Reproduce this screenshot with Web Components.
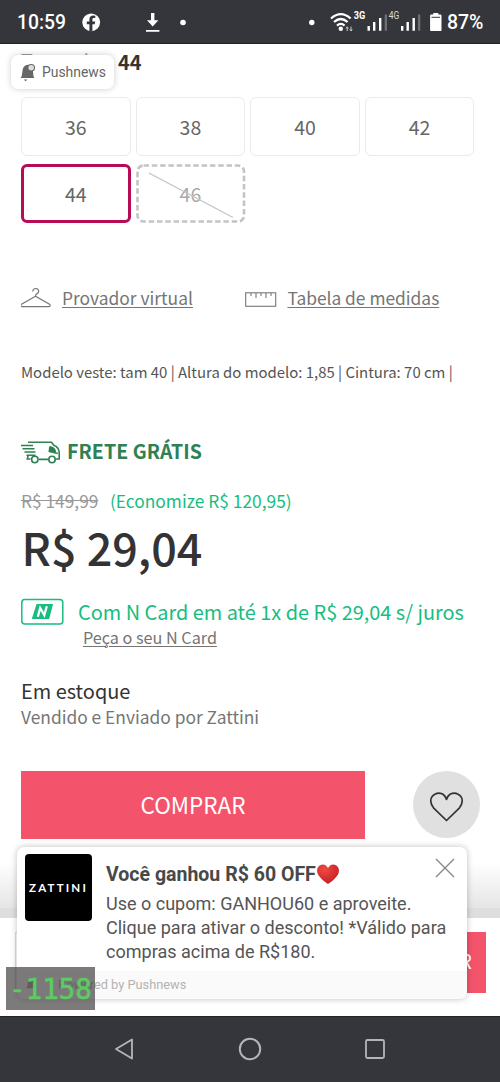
<!DOCTYPE html>
<html lang="pt-BR">
<head>
<meta charset="utf-8">
<title>Zattini</title>
<style>
html,body{margin:0;background:#fff}
body{width:500px;height:1082px;overflow:hidden;font-family:"Noto Sans CJK SC","Noto Sans",sans-serif}
</style>
</head>
<body>
<product-screen></product-screen>
<script>
const define = (name, html, init) => customElements.define(name, class extends HTMLElement {
  connectedCallback() {
    if (this.shadowRoot) return;
    const root = this.attachShadow({ mode: 'open' });
    const t = document.createElement('template');
    t.innerHTML = html;
    root.append(t.content.cloneNode(true));
    if (init) init(this, root);
  }
});

/* One line of text: h = line box, size = font size, width = advance to fill,
   track = fill it with letter spacing and keep the size. */
define('fit-line', `<style>
:host{display:block;white-space:pre;flex:none}
</style><span><slot></slot></span>`, (el, root) => {
  const span = root.querySelector('span');
  const h = el.getAttribute('h'), w = +el.getAttribute('width');
  let size = +el.getAttribute('size') || 18;
  el.style.height = el.style.lineHeight = h + 'px';
  el.style.fontSize = size + 'px';
  if (!w) return;
  const natural = span.getBoundingClientRect().width;
  if (el.hasAttribute('track')) el.style.letterSpacing = (w - natural) / el.textContent.length + 'px';
  else el.style.fontSize = size * w / natural + 'px';
});

define('status-bar', `<style>
:host{display:flex;height:44px;box-sizing:border-box;background:#35363b;border-bottom:1px solid #222326;color:#fff;font-family:Roboto,sans-serif;font-weight:500}
svg{display:block}
fit-line{margin-left:17px}
fit-line.p{margin-left:0}
</style>
<fit-line h="46" width="49" size="19">10:59</fit-line>
<svg width="381" height="44" viewBox="66 0 381 44" fill="#fff">
<circle cx="91.2" cy="22.3" r="8.9"/>
<path d="M89.400 31.300v-7h-2.600v-2.800h2.600v-2c0-2.700 1.500-4 3.800-4l2.100.2v2.400h-1.300c-1.200 0-1.600.7-1.600 1.500v1.900h2.800l-.5 2.800h-2.300v7z" fill="#35363b"/>
<path d="M151 13h3.400v7.200h4l-5.700 6.200-5.700-6.200h4zM146 30h13.400v1.800H146z"/>
<circle cx="183" cy="22.500" r="2.800"/><circle cx="311.800" cy="22.500" r="2.700"/>
<g fill="none" stroke="#fff" stroke-width="2.200"><path d="M331 18.500q9.800-8.600 19.600 0"/><path d="M334 22q6.800-6 13.600 0"/><path d="M337 25.600q3.800-3.400 7.600 0"/></g>
<circle cx="340.800" cy="28.700" r="2.200"/>
<path d="M347.200 31v-3.600M346 28.400l1.200-1.600 1.200 1.600M351 26.500v4M349.800 29.400l1.200 1.600 1.200-1.600" stroke="#ddd" stroke-width=".9" fill="none"/>
<text x="353.700" y="19" font-size="10" font-weight="700" textLength="11.500" lengthAdjust="spacingAndGlyphs">3G</text>
<text x="388.700" y="19" font-size="10" font-weight="400" textLength="10.500" lengthAdjust="spacingAndGlyphs" fill="#ddd">4G</text>
<path d="M367.500 26h2.400v4.700h-2.400zM373 22h2.400v8.700H373zM379 18h2.400v12.700H379zM401 26h2.400v4.700H401zM406.500 22h2.400v8.700h-2.400zM412.500 18h2.400v12.700h-2.400z"/>
<path d="M384.700 14.500h2.300v16.200h-2.300zM418 14.500h2.300v16.200H418z" fill="#6e6f73"/>
<path d="M433.300 13h5v1.500h2q1.200 0 1.200 1.200v14.200q0 1.200-1.200 1.200h-9q-1.200 0-1.200-1.200V15.700q0-1.200 1.200-1.200h2z"/><path d="M431.500 16.800h8.500v1h-8.500z" fill="#35363b"/>
</svg>
<fit-line class="p" h="46" width="36.500" size="18">87%</fit-line>`);

define('push-chip', `<style>
:host{position:absolute;left:11px;top:55px;width:103px;height:34px;border-radius:7px;background:#fff;box-shadow:0 0 6px rgba(0,0,0,.2);display:flex;align-items:center;color:#666;font-family:Roboto,sans-serif}
svg{margin:0 6px 0 9px}
</style><svg width="16" height="19" viewBox="0 0 15 17.500"><path d="M.500 14l1.200-2 .8-6Q3.500 1.500 8 1.500l4 4 .6 6.500.9 2z" fill="#666"/><circle cx="10.500" cy="4.300" r="3.100" fill="#ddd" stroke="#666"/><path d="M3.500 15.200h3.500l-1.700 1.800z" fill="#666"/></svg>
<fit-line h="32" width="64" size="13.500">Pushnews</fit-line>`);

define('size-option', `<style>
:host{display:flex;justify-content:center;height:59px;box-sizing:border-box;border:1.500px solid #ebebeb;border-radius:6px;color:#666}
:host([selected]){border:3px solid #b80b55}
:host([off]){border:0;color:#aaa;position:relative}
svg{display:none;position:absolute;inset:0}
:host([off]) svg{display:block}
fit-line{align-self:center}
</style><svg width="110" height="59" fill="none" stroke="#c4c4c4"><rect x="1.500" y="1.500" width="106.500" height="56" rx="6" stroke-width="2.600" stroke-dasharray="5.500 2.800"/><path d="M13 9l84 44.500" stroke-width="1.300"/></svg>
<fit-line h="59" size="19.500"><slot></slot></fit-line>`);

define('size-picker', `<style>
:host{display:grid;grid-template-columns:repeat(4,109.700px);column-gap:4.900px;row-gap:7.500px;margin-top:15px;height:126px}
</style><size-option>36</size-option><size-option>38</size-option><size-option>40</size-option><size-option>42</size-option><size-option selected>44</size-option><size-option off>46</size-option>`);

define('fit-links', `<style>
:host{display:flex;margin-top:60px;height:30px;color:#757575}
.u{text-decoration:underline;text-decoration-thickness:1.400px;text-underline-offset:2px}
svg{flex:none;display:block}
</style>
<svg width="41" height="30" viewBox="21 283 41 30" fill="none" stroke="#777" stroke-width="1.200"><path d="M32.700 291.500q.3-3 3.200-3 2.800.2 2.800 2.700 0 1.600-1.700 2.400-1.500.8-1.500 2.600M35.500 296.200l-14 8q-1.800 2.300.5 2.500h26.500q2.800-.3 1-2.500z"/></svg>
<fit-line class="u" h="29" width="131">Provador virtual</fit-line>
<svg width="94.500" height="30" viewBox="193 283 94.500 30" fill="none" stroke="#777" stroke-width="1.100"><rect x="245.700" y="292.800" width="30" height="13.500"/><path d="M251 293v3M256 293v5M261 293v3M266 293v5M271 293v3"/></svg>
<fit-line class="u" h="29" width="152">Tabela de medidas</fit-line>`);

define('free-shipping', `<style>
:host{display:flex;margin-top:51px;height:28px;color:#2f8053}
svg{margin-left:-1px;flex:none;display:block}
fit-line{font-weight:700}
</style><svg width="47" height="28" viewBox="20 437 47 28" fill="none" stroke="#2f8053" stroke-width="1.600"><path d="M28 442.300h23.500l2.500 3.200q4.500 1.500 5.200 6.500v7h-3.400M48 459.400h-9M30.500 459h-3.200l.8-3.500M21 445.500h12M22.500 448.700h12M24.500 452h11M26.500 455.200h9M50 446.500l-.7 5 8.500 2"/><path d="M50.800 447l-.5 3.800 5 .8q-.7-3.800-4.500-4.600z" fill="#2f8053"/><circle cx="34.800" cy="459.500" r="3.200"/><circle cx="52" cy="459.500" r="3.200"/></svg>
<fit-line h="28" size="19.500" track width="135">FRETE GRÁTIS</fit-line>`);

define('price-block', `<style>
:host{display:block;margin-top:22px;height:106px}
.r{display:flex;gap:11.500px}
.old{color:#999;text-decoration:line-through}
.save{color:#17bd7e}
.now{color:#333;font-weight:500;margin:5px 0 0 .500px}
</style><div class="r"><fit-line class="old" h="28" width="77.500">R$ 149,99</fit-line><fit-line class="save" h="28" width="182">(Economize R$ 120,95)</fit-line></div>
<fit-line class="now" h="54" width="181" size="44">R$ 29,04</fit-line>`);

define('n-card', `<style>
:host{display:grid;grid-template-columns:57px 1fr;margin-top:5px}
svg{display:block}
.g{color:#17bd7e}
.l{grid-column:2;margin:0 0 0 5px;color:#757575;text-decoration:underline;text-decoration-thickness:1px;text-underline-offset:2px}
</style><svg width="56" height="28" viewBox="0 1.500 56 28"><rect x=".8" y="3" width="41" height="24.500" rx="3" fill="none" stroke="#17bd7e" stroke-width="1.500"/><path d="M15.500 7.500H32L28.200 22.500H10.800z" fill="#17bd7e"/><path d="M16.800 20.300L19.200 11.500 23.300 18.500 25.800 9.700" fill="none" stroke="#fff" stroke-width="2.300"/></svg>
<fit-line class="g" h="28" width="386">Com N Card em até 1x de R$ 29,04 s/ juros</fit-line>
<fit-line class="l" h="22" width="134">Peça o seu N Card</fit-line>`);

define('stock-info', `<style>
:host{display:block;margin-top:29px;height:56px}
.a{color:#333}.b{color:#757575}
</style><fit-line class="a" h="28" width="109.500">Em estoque</fit-line><fit-line class="b" h="24" width="238.500">Vendido e Enviado por Zattini</fit-line>`);

define('buy-row', `<style>
:host{display:flex;justify-content:space-between;margin-top:38px;width:458.500px}
.buy{width:344px;height:68px;background:#f4546b;color:#fff;display:flex;justify-content:center}
.fav{width:67px;height:67px;border-radius:50%;background:#e0e0e0}
svg{display:block}
</style><div class="buy"><fit-line h="66" width="105">COMPRAR</fit-line></div>
<div class="fav"><svg width="67" height="67" viewBox="0 0 67 67" fill="none" stroke="#333" stroke-width="1.700"><path d="M33.500 49.500L20.500 36.800Q15.500 30 19.300 25.300Q24 20 30 23.300Q32.400 25 33.500 28.400Q34.600 25 37 23.300Q43 20 47.700 25.300Q51.500 30 46.500 36.800z" stroke-linejoin="round"/></svg></div>`);

define('sticky-buy', `<style>
:host{position:absolute;left:0;top:862px;width:500px;height:154px;display:flex;flex-direction:column}
.s{height:46px;background:linear-gradient(rgba(0,0,0,0),rgba(0,0,0,.1))}
.e{height:10px;background:#dedede}
.bar{flex:1;background:#fff;padding:14px 14px 0 15px;display:flex;justify-content:space-between}
.thumb{width:60px;height:61px;box-sizing:border-box;border:1px solid #ddd}
.b{width:250px;height:61px;background:#f4546b;color:#fff;display:flex;justify-content:flex-end}
fit-line{margin-right:14px}
</style><div class="s"></div><div class="e"></div><div class="bar"><div class="thumb"></div><div class="b"><fit-line h="58" size="19.500">COMPRAR</fit-line></div></div>`);

define('push-card', `<style>
:host{position:absolute;left:17px;top:847px;width:450px;height:152px;border-radius:7px;background:#fff;box-shadow:0 0 6px rgba(0,0,0,.25);overflow:hidden;display:flex;flex-direction:column;font-family:Roboto,sans-serif;color:#555}
.m{display:flex;height:124px;flex:none}
.logo{width:67px;height:67px;flex:none;margin:7px 14px 0 8px;border-radius:4px;background:#000;color:#fff;display:flex;justify-content:center;font-family:Lato,sans-serif;font-weight:700}
.t{padding-top:15px;width:328px;flex:none}
.h{display:flex;height:30px}.h fit-line{font-weight:700;color:#484848}
.x{margin:11px 0 0 1px}
.f{height:28px;background:#fafafa;display:flex;color:#b3b3b3}
.f fit-line{margin-left:20px}
.f svg{margin:6px 0 0 9px}
svg{display:block;flex:none}
</style><div class="m"><div class="logo"><fit-line h="67" size="11.500" track width="59">ZATTINI</fit-line></div>
<div class="t"><div class="h"><fit-line h="25" width="210">Você ganhou R$ 60 OFF</fit-line><svg width="24" height="24" viewBox="0 0 24 24"><defs><radialGradient id="g" cx=".35" cy=".25" r=".8"><stop offset="0" stop-color="#ee4a40"/><stop offset="1" stop-color="#c41d24"/></radialGradient></defs><path d="M12 22Q5.500 18 2 12.500Q-.5 7 3.500 3.600Q8.600.8 12 6Q15.400.8 20.500 3.600Q24.500 7 22 12.500Q18.500 18 12 22z" fill="url(#g)"/></svg></div>
<fit-line h="23.800" width="305.500">Use o cupom: GANHOU60 e aproveite.</fit-line><fit-line h="23.800" width="340.500">Clique para ativar o desconto! *Válido para</fit-line><fit-line h="23.800" width="209.500">compras acima de R$180.</fit-line></div>
<svg class="x" width="20" height="20" viewBox="0 0 20 20"><path d="M1 1l18 18M19 1L1 19" stroke="#888" stroke-width="1.400"/></svg></div>
<div class="f"><svg width="12" height="14" viewBox="0 0 15 17.500"><path d="M.500 14l1.200-2 .8-6Q3.500 1.500 8 1.500l4 4 .6 6.500.9 2z" fill="#999"/></svg><fit-line h="27" width="128.500" size="13.500">Powered by Pushnews</fit-line></div>`);

define('scroll-counter', `<style>
:host{position:absolute;left:6px;top:967px;width:89px;height:43px;background:rgba(70,66,68,.7);color:#5ccb62;display:flex;justify-content:center;font-family:"DejaVu Sans Mono",monospace;-webkit-text-stroke:.500px #5ccb62}
</style><fit-line h="45" width="83" size="26">-1158</fit-line>`);

define('nav-bar', `<style>
:host{display:flex;justify-content:space-between;align-items:center;height:66px;box-sizing:border-box;padding:0 114px 2px 113px;background:#35363b;border-top:1px solid #222326}
</style>
<svg width="22" height="24" fill="none" stroke="#b4b5b8" stroke-width="1.800" stroke-linejoin="round"><path d="M3 12L19 2.500v19z"/></svg>
<svg width="24" height="24" fill="none" stroke="#b4b5b8" stroke-width="2"><circle cx="12" cy="12" r="10.200"/></svg>
<svg width="22" height="22" fill="none" stroke="#b4b5b8" stroke-width="1.800"><rect x="2" y="2" width="18" height="18" rx="1.500"/></svg>`);

define('product-screen', `<style>
:host{display:flex;flex-direction:column;position:relative;width:500px;height:1082px;overflow:hidden;background:#fff}
main{flex:1;min-height:0;padding:3px 20px 0 21px;overflow:hidden;box-sizing:border-box}
.title{display:flex;color:#333;font-weight:700;height:35px}
.title .k{font-weight:400;width:97px;color:#999}
.model{margin-top:45px;color:#555}
</style>
<status-bar></status-bar>
<main>
<div class="title"><fit-line class="k" h="27" width="92">Tamanho:</fit-line><fit-line h="29" width="23.500">44</fit-line></div>
<size-picker></size-picker>
<fit-links></fit-links>
<fit-line class="model" h="28" width="432">Modelo veste: tam 40 | Altura do modelo: 1,85 | Cintura: 70 cm |</fit-line>
<free-shipping></free-shipping>
<price-block></price-block>
<n-card></n-card>
<stock-info></stock-info>
<buy-row></buy-row>
</main>
<push-chip></push-chip>
<sticky-buy></sticky-buy>
<push-card></push-card>
<scroll-counter></scroll-counter>
<nav-bar></nav-bar>`);
</script>
</body>
</html>
